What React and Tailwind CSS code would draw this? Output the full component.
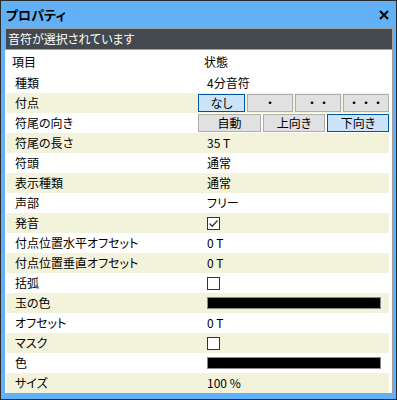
import React from 'react';

const font = { fontFamily: '"Noto Sans CJK JP", "Noto Sans", sans-serif' };

const rows = [
    { label: '種類', type: 'text', value: '4分音符' },
    { label: '付点', type: 'dots' },
    { label: '符尾の向き', type: 'stem' },
    { label: '符尾の長さ', type: 'text', value: '35 T' },
    { label: '符頭', type: 'text', value: '通常' },
    { label: '表示種類', type: 'text', value: '通常' },
    { label: '声部', type: 'text', value: 'フリー' },
    { label: '発音', type: 'check', value: true },
    { label: '付点位置水平オフセット', type: 'text', value: '0 T' },
    { label: '付点位置垂直オフセット', type: 'text', value: '0 T' },
    { label: '括弧', type: 'check', value: false },
    { label: '玉の色', type: 'color' },
    { label: 'オフセット', type: 'text', value: '0 T' },
    { label: 'マスク', type: 'check', value: false },
    { label: '色', type: 'color' },
    { label: 'サイズ', type: 'text', value: '100 %' },
];

const Btn = ({ children, active, className = '' }) => (
    <div
        className={`h-[18px] flex items-center justify-center border text-[12px] leading-none ${active ? 'bg-[#cce4f7] border-[#005499]' : 'bg-[#e1e1e1] border-[#adadad]'} ${className}`}
    >
        {children}
    </div>
);

const Check = ({ checked }) => (
    <div className="w-[13px] h-[13px] border border-[#333333] bg-white flex items-center justify-center">
        {checked && (
            <svg width="11" height="11" viewBox="0 0 11 11">
                <path d="M1.5 5.5 L4.2 8.2 L9.5 2.5" fill="none" stroke="#333333" strokeWidth="1.3" />
            </svg>
        )}
    </div>
);

const Value = ({ row }) => {
    if (row.type === 'dots') {
        return (
            <div className="flex gap-[2px] pl-[1px]">
                <Btn active className="w-[47px]">なし</Btn>
                <Btn className="w-[46px] [font-feature-settings:normal]">・</Btn>
                <Btn className="w-[46px] [font-feature-settings:normal]">・・</Btn>
                <Btn className="w-[46px] [font-feature-settings:normal]">・・・</Btn>
            </div>
        );
    }
    if (row.type === 'stem') {
        return (
            <div className="flex gap-[2px] pl-[1px]">
                <Btn className="w-[63px]">自動</Btn>
                <Btn className="w-[62px]">上向き</Btn>
                <Btn active className="w-[62px]">下向き</Btn>
            </div>
        );
    }
    if (row.type === 'check') {
        return <div className="pl-[9px]"><Check checked={row.value} /></div>;
    }
    if (row.type === 'color') {
        return (
            <div className="pl-[9px] pr-[8px]">
                <div className="h-[12px] bg-black border border-[#8a8a8a]" />
            </div>
        );
    }
    return <div className="pl-[9px]">{row.value}</div>;
};

export default function App() {
    return (
        <div style={font} className="w-[397px] h-[400px] border border-[#2b2b2b] bg-[#62b0f5] flex flex-col text-[12px] text-black [font-feature-settings:'palt']">
            <div className="h-[27px] flex items-center justify-between pl-[5px] pr-[7px]">
                <span className="font-bold text-[13px]">プロパティ</span>
                <svg width="10" height="10" viewBox="0 0 10 10">
                    <path d="M1 1 L9 9 M9 1 L1 9" stroke="#000" strokeWidth="2" />
                </svg>
            </div>
            <div className="flex-1 pl-[4px] pr-[3px] pb-[5px] flex flex-col">
                <div className="h-[22px] bg-[#43494e] border border-[#a0a0a0] text-white flex items-center pl-[2px] text-[12px]">
                    音符が選択されています
                </div>
                <div className="flex-1 bg-white border-r border-b border-[#a0a0a0] pl-[1px] pr-[3px]">
                    <div className="h-[23px] flex items-center">
                        <div className="w-[193px] pl-[6px]">項目</div>
                        <div className="pl-[5px]">状態</div>
                    </div>
                    {rows.map((row, i) => (
                        <div key={row.label} className={`h-[20px] flex items-center ${i % 2 === 1 ? 'bg-[#f3f3dc]' : 'bg-white'}`}>
                            <div className="w-[192px] pl-[9px] whitespace-nowrap">{row.label}</div>
                            <div className="flex-1">
                                <Value row={row} />
                            </div>
                        </div>
                    ))}
                </div>
            </div>
        </div>
    );
}
